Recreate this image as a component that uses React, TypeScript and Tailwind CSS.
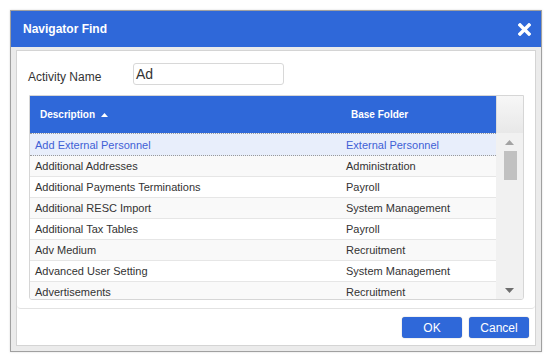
import React from "react";

const rows: [string, string][] = [
  ["Add External Personnel", "External Personnel"],
  ["Additional Addresses", "Administration"],
  ["Additional Payments Terminations", "Payroll"],
  ["Additional RESC Import", "System Management"],
  ["Additional Tax Tables", "Payroll"],
  ["Adv Medium", "Recruitment"],
  ["Advanced User Setting", "System Management"],
  ["Advertisements", "Recruitment"],
];

export default function App() {
  return (
    <div className="w-[552px] h-[362px] bg-white pt-[10px] pl-[10px] font-['Liberation_Sans',Arial,sans-serif]">
      <div className="w-[532px] h-[342px] border border-[#a0a0a0] bg-[#ebebeb] flex flex-col shadow-[0_0_2px_rgba(0,0,0,0.15)]">
        <div className="h-[36px] shrink-0 bg-[#2f68d9] flex items-center justify-between pl-[12px] pr-[10px]">
          <span className="text-white text-[12px] font-bold">Navigator Find</span>
          <svg width="13" height="13" viewBox="0 0 13 13" className="mt-[1px]">
            <path d="M2 2 L11 11 M11 2 L2 11" stroke="white" strokeWidth="3.4" strokeLinecap="square" />
          </svg>
        </div>
        <div className="flex-1 pt-[3px] px-[5px] pb-[5px] flex">
          <div className="flex-1 bg-white border border-[#d4d4d4] flex flex-col">
            <div className="h-[258px] border-b border-[#e2e2e2] rounded-b-[4px] pl-[12px] pr-[11px] pt-[12px]">
              <div className="flex items-center h-[22px]">
                <span className="w-[105px] -ml-[1px] text-[12px] text-[#333] pt-[6px]">Activity Name</span>
                <div className="w-[151px] h-[22px] border border-[#d8d8d8] rounded-[3px] pl-[2px] flex items-center text-[14px] text-[#333]">
                  Ad
                </div>
              </div>
              <div className="mt-[10px] w-[495px] h-[205px] border border-[#d6d6d6] rounded-b-[3px] flex flex-col overflow-hidden">
                <div className="h-[37px] shrink-0 flex">
                  <div className="w-[466px] bg-[#2f68d9] flex items-center text-white text-[10px] font-bold">
                    <div className="w-[310px] pl-[10px] flex items-center gap-[6px]">
                      Description
                      <svg width="7" height="4" viewBox="0 0 7 4">
                        <path d="M0 4 L3.5 0 L7 4 Z" fill="white" />
                      </svg>
                    </div>
                    <div className="pl-[11px]">Base Folder</div>
                  </div>
                  <div className="flex-1 border-l border-[#dcdcdc] bg-gradient-to-b from-[#f7f7f7] to-[#e8e8e8]" />
                </div>
                <div className="flex-1 flex min-h-0">
                  <div className="w-[466px] overflow-hidden">
                    {rows.map(([d, f], i) => {
                      const sel = i === 0;
                      return (
                        <div
                          key={d}
                          className={
                            "flex items-center text-[11px] " +
                            (sel
                              ? "h-[23px] pt-[1px] bg-[#e8eefb] text-[#3f5fd6] border-y border-dotted border-[#9a9a9a]"
                              : (i % 2 === 1 ? "bg-[#f9f9f9] " : "bg-white ") +
                                "h-[21px] pt-[1px] text-[#333] border-b border-[#e6e6e6]")
                          }
                        >
                          <div className="w-[310px] pl-[5px]">{d}</div>
                          <div className="pl-[6px]">{f}</div>
                        </div>
                      );
                    })}
                  </div>
                  <div className="flex-1 bg-[#f1f1f1] flex flex-col items-center pt-[7px] pb-[6px]">
                    <svg width="9" height="5" viewBox="0 0 9 5">
                      <path d="M0 5 L4.5 0 L9 5 Z" fill="#a3a3a3" />
                    </svg>
                    <div className="mt-[6px] w-[13px] h-[29px] bg-[#c1c1c1] ml-[1px]" />
                    <div className="flex-1" />
                    <svg width="9" height="5" viewBox="0 0 9 5">
                      <path d="M0 0 L9 0 L4.5 5 Z" fill="#6e6e6e" />
                    </svg>
                  </div>
                </div>
              </div>
            </div>
            <div className="flex justify-end gap-[7px] pt-[8px] pr-[6px]">
              <button className="w-[60px] h-[21px] rounded-[3px] bg-[#2f68d9] text-white text-[12px] shadow-[0_0_1px_rgba(0,0,0,0.5)]">
                OK
              </button>
              <button className="w-[60px] h-[21px] rounded-[3px] bg-[#2f68d9] text-white text-[12px] shadow-[0_0_1px_rgba(0,0,0,0.5)]">
                Cancel
              </button>
            </div>
          </div>
        </div>
      </div>
    </div>
  );
}
